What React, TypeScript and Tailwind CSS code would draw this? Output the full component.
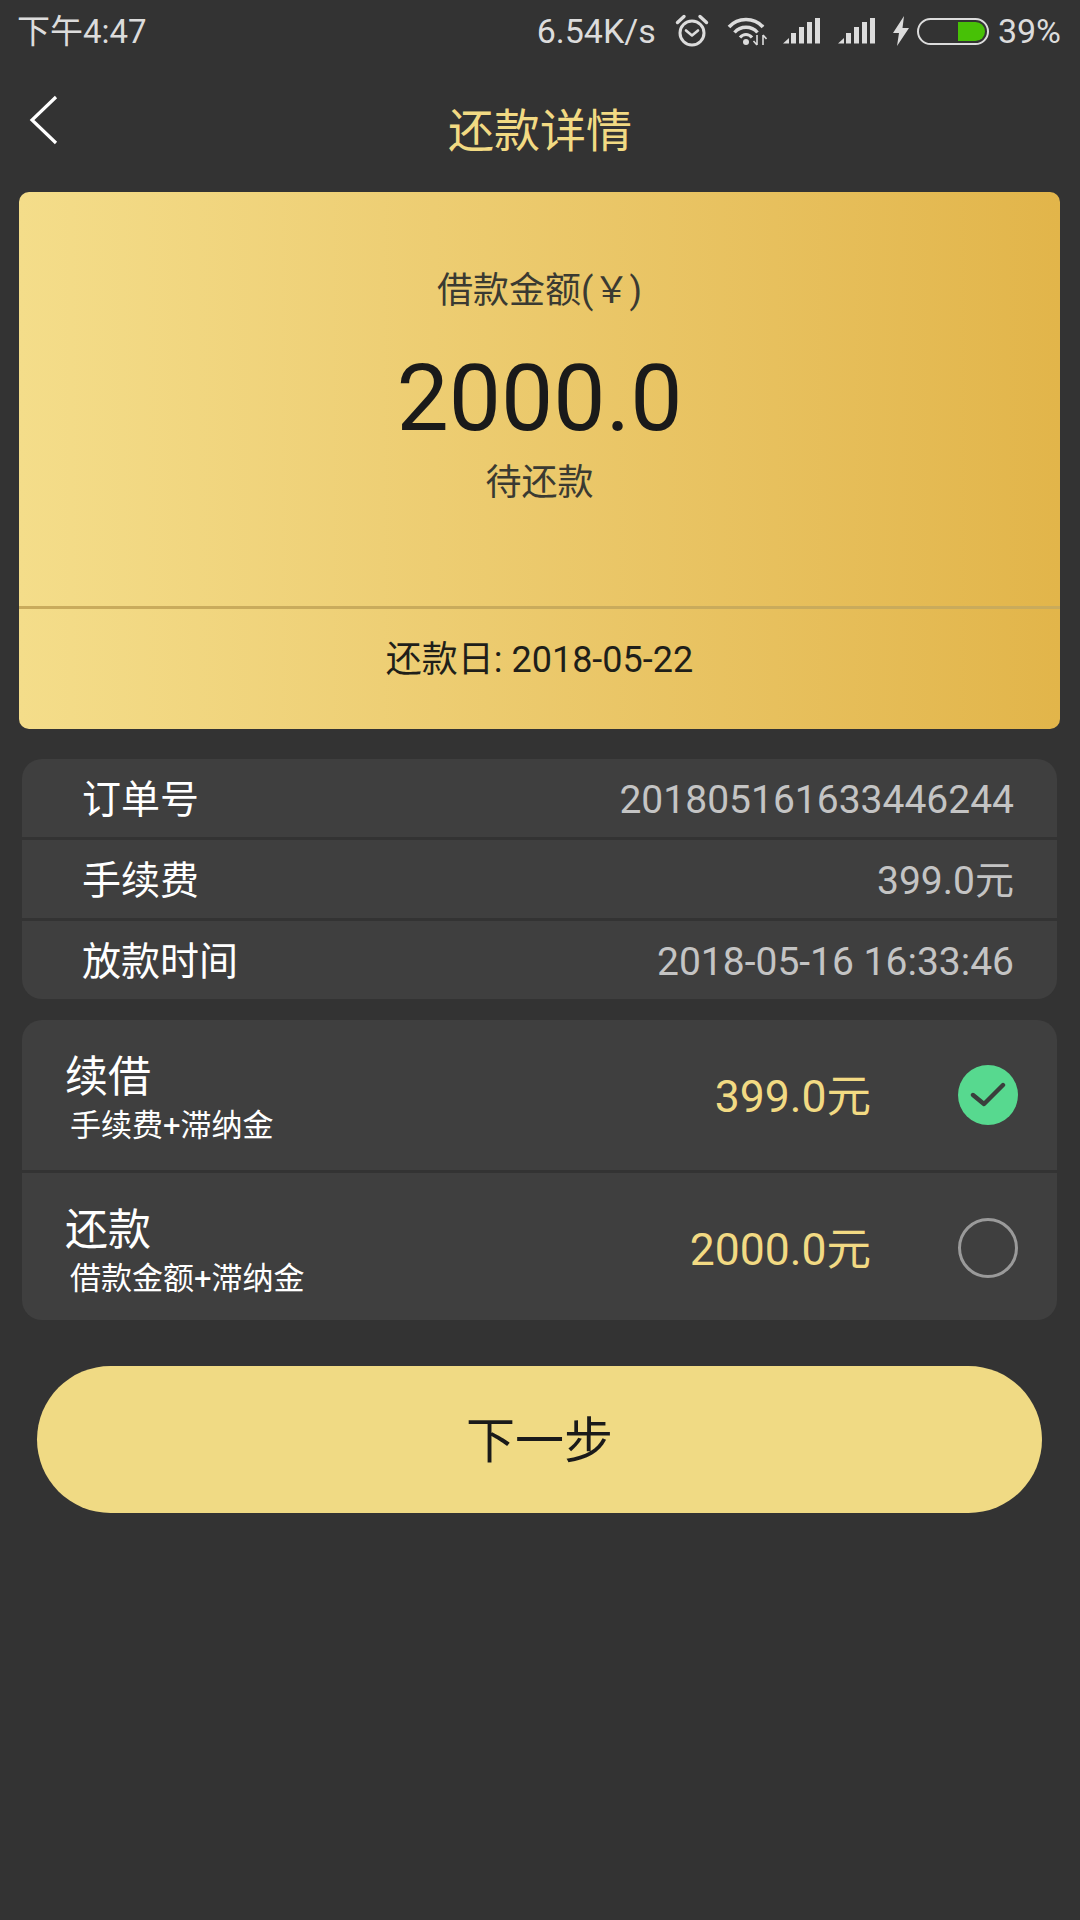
const font = "font-['Roboto','Noto_Sans_CJK_SC',sans-serif]"

function AlarmIcon() {
	return (
		<svg width="34" height="34" viewBox="0 0 34 34" fill="none" stroke="#dcdcdc" strokeLinecap="round">
			<circle cx="17" cy="19" r="12" strokeWidth="3" />
			<path d="M11 16.5l6 5 6-5" strokeWidth="2.6" strokeLinejoin="round" />
			<path d="M2.5 8.5L9 2.5M31.5 8.5L25 2.5" strokeWidth="3.4" />
		</svg>
	)
}

function WifiIcon() {
	return (
		<svg width="40" height="30" viewBox="0 0 40 30" fill="none" stroke="#dcdcdc">
			<path d="M2 11C11 1 27 1 36 11" strokeWidth="3.6" />
			<path d="M7.5 16.5C13.5 9.5 24.5 9.5 30.5 16.5" strokeWidth="3.4" />
			<path d="M13 21.5C16.5 17.5 21.5 17.5 25 21.5" strokeWidth="3.2" />
			<circle cx="19" cy="26" r="3" fill="#dcdcdc" stroke="none" />
			<path d="M30 19v10M26.5 25l3.5 4M36 29V19M36 19l3.5 4" strokeWidth="1.6" />
		</svg>
	)
}

function SignalIcon() {
	return (
		<svg width="37" height="26" viewBox="0 0 37 26" fill="#dcdcdc">
			<path d="M0 25.5L6 20v5.5z" />
			<rect x="8" y="15" width="5" height="10.5" />
			<rect x="16" y="9" width="5" height="16.5" />
			<rect x="24" y="4" width="5" height="21.5" />
			<rect x="32" y="0" width="5" height="25.5" />
		</svg>
	)
}

function BoltIcon() {
	return (
		<svg width="16" height="30" viewBox="0 0 16 30" fill="#dcdcdc">
			<path d="M11 0L0 17h6L4 30l12-18H9.5z" />
		</svg>
	)
}

function BatteryIcon() {
	return (
		<div className="w-[72px] h-[27px] rounded-full border-2 border-[#dcdcdc] flex justify-end p-[2px]">
			<div className="w-[27px] h-full bg-[#47c106] rounded-r-full" />
		</div>
	)
}

function InfoRow({ label, value }: { label: string; value: string }) {
	return (
		<div className="h-[78px] flex items-center justify-between pl-[60px] pr-[43px] pt-[4px] bg-[#3f3f3f]">
			<span className="text-[39px] leading-none text-white">{label}</span>
			<span className="text-[39px] leading-none text-[#c4c4c4]">{value}</span>
		</div>
	)
}

function OptionRow({
	title,
	desc,
	amount,
	checked,
}: {
	title: string
	desc: string
	amount: string
	checked?: boolean
}) {
	return (
		<div
			className={
				checked
					? "h-[150px] flex items-center bg-[#3f3f3f] pl-[43px] pr-[39px]"
					: "h-[147px] flex items-center bg-[#3f3f3f] pl-[43px] pr-[39px] pt-[3px]"
			}>
			<div className="flex-1 flex flex-col mt-[5px]">
				<span className="text-[43px] leading-[50px] text-white">{title}</span>
				<span className="text-[31px] leading-[36px] mt-[6px] ml-[5px] text-white">{desc}</span>
			</div>
			<span className="text-[44.5px] leading-none text-[#f2da83] mr-[87px] mt-[4px]">{amount}</span>
			{checked ? (
				<div className="w-[60px] h-[60px] rounded-full bg-[#57d98f] flex items-center justify-center">
					<svg width="36" height="28" viewBox="0 0 36 28" fill="none" stroke="#3a3f3c" strokeWidth="4.4" strokeLinecap="round" strokeLinejoin="round">
						<path d="M3 14l11 9L33 4" />
					</svg>
				</div>
			) : (
				<div className="w-[60px] h-[60px] rounded-full border-[3px] border-[#9a9a9a]" />
			)}
		</div>
	)
}

export default function App() {
	return (
		<div className={`w-[1080px] h-[1920px] bg-[#333333] flex flex-col overflow-hidden ${font}`}>
			{/* status bar */}
			<div className="h-[62px] flex items-center pl-[17px] pr-[19px] text-[34px] leading-none text-[#dcdcdc]">
				<span className="flex-1 text-[33px]">下午4:47</span>
				<span>6.54K/s</span>
				<div className="ml-[19px] flex"><AlarmIcon /></div>
				<div className="ml-[18px] flex"><WifiIcon /></div>
				<div className="ml-[16px] flex"><SignalIcon /></div>
				<div className="ml-[18px] flex"><SignalIcon /></div>
				<div className="ml-[18px] flex"><BoltIcon /></div>
				<div className="ml-[8px] flex"><BatteryIcon /></div>
				<span className="ml-[9px]">39%</span>
			</div>

			{/* nav */}
			<div className="h-[130px] grid grid-cols-[1fr_auto_1fr]">
				<svg className="ml-[28px] mt-[33px]" width="32" height="50" viewBox="0 0 32 50" fill="none" stroke="#ffffff" strokeWidth="3.2">
					<path d="M28 2L4 25l24 23" />
				</svg>
				<h1 className="text-[46px] leading-none font-normal text-[#f2da83] mt-[46px]">还款详情</h1>
			</div>

			{/* amount card */}
			<div className="ml-[19px] mr-[20px] h-[537px] rounded-[10px] bg-gradient-to-r from-[#f4dd8a] to-[#e2b54a] flex flex-col">
				<div className="h-[414px] flex flex-col items-center pt-[74px]">
					<span className="text-[36px] leading-[50px] text-[#3a3a32]">借款金额(￥)</span>
					<span className="text-[93px] leading-[100px] mt-[33px] text-[#1a1a1a]">2000.0</span>
					<span className="text-[36px] leading-[50px] mt-[9px] text-[#3a3a32]">待还款</span>
				</div>
				<div className="h-[3px] bg-[#c9ab5c]" />
				<div className="flex-1 flex items-center justify-center pb-[18px] text-[36px] text-[#1f1f1a]">
					还款日: 2018-05-22
				</div>
			</div>

			{/* order info */}
			<div className="ml-[22px] mr-[23px] mt-[30px] rounded-[20px] overflow-hidden flex flex-col gap-[3px]">
				<InfoRow label="订单号" value="201805161633446244" />
				<InfoRow label="手续费" value="399.0元" />
				<InfoRow label="放款时间" value="2018-05-16 16:33:46" />
			</div>

			{/* options */}
			<div className="ml-[22px] mr-[23px] mt-[21px] rounded-[20px] overflow-hidden flex flex-col gap-[3px]">
				<OptionRow title="续借" desc="手续费+滞纳金" amount="399.0元" checked />
				<OptionRow title="还款" desc="借款金额+滞纳金" amount="2000.0元" />
			</div>

			<button className="ml-[37px] mr-[38px] mt-[46px] h-[147px] pt-[4px] rounded-full bg-[#f0da84] text-[49px] text-[#1a1a1a]">
				下一步
			</button>
		</div>
	)
}
